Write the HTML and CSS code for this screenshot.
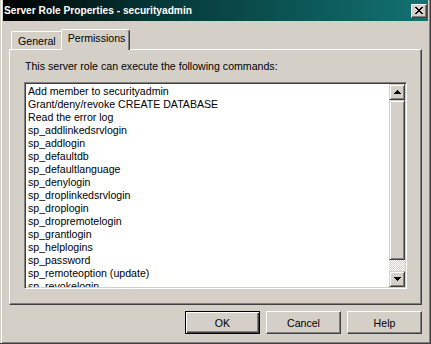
FILE: index.html
```html
<!DOCTYPE html>
<html lang="en">
<head>
    <meta charset="UTF-8">
    <meta name="viewport" content="width=device-width, initial-scale=1.0">
    <title>Server Role Properties - securityadmin</title>
    <link rel="stylesheet" href="styles.css">
</head>
<body>
    <div class="window">
        <div class="title-bar">
            <span class="title">Server Role Properties - securityadmin</span>
            <div class="close-btn">
                <svg width="8" height="7" viewBox="0 0 8 7" shape-rendering="crispEdges">
                    <path d="M0 0h2v1h-2zM6 0h2v1h-2zM1 1h2v1h-2zM5 1h2v1h-2zM2 2h4v1h-4zM3 3h2v1h-2zM2 4h4v1h-4zM1 5h2v1h-2zM5 5h2v1h-2zM0 6h2v1h-2zM6 6h2v1h-2z" fill="#000"/>
                </svg>
            </div>
        </div>

        <div class="content">
            <div class="tabs">
                <div class="tab">General</div>
                <div class="tab active">Permissions</div>
            </div>

            <div class="panel">
                <div class="caption">This server role can execute the following commands:</div>
                <div class="listbox">
                    <ul class="items">
                        <li>Add member to securityadmin</li>
                        <li>Grant/deny/revoke CREATE DATABASE</li>
                        <li>Read the error log</li>
                        <li>sp_addlinkedsrvlogin</li>
                        <li>sp_addlogin</li>
                        <li>sp_defaultdb</li>
                        <li>sp_defaultlanguage</li>
                        <li>sp_denylogin</li>
                        <li>sp_droplinkedsrvlogin</li>
                        <li>sp_droplogin</li>
                        <li>sp_dropremotelogin</li>
                        <li>sp_grantlogin</li>
                        <li>sp_helplogins</li>
                        <li>sp_password</li>
                        <li>sp_remoteoption (update)</li>
                        <li>sp_revokelogin</li>
                    </ul>
                    <div class="scrollbar">
                        <div class="sb-btn">
                            <svg width="7" height="4" viewBox="0 0 7 4" shape-rendering="crispEdges">
                                <path d="M3 0h1v1h-1zM2 1h3v1h-3zM1 2h5v1h-5zM0 3h7v1h-7z" fill="#000"/>
                            </svg>
                        </div>
                        <div class="sb-thumb"></div>
                        <div class="sb-track"></div>
                        <div class="sb-btn">
                            <svg width="7" height="4" viewBox="0 0 7 4" shape-rendering="crispEdges">
                                <path d="M0 0h7v1h-7zM1 1h5v1h-5zM2 2h3v1h-3zM3 3h1v1h-1z" fill="#000"/>
                            </svg>
                        </div>
                    </div>
                </div>
            </div>

            <div class="buttons">
                <button class="btn default">OK</button>
                <button class="btn">Cancel</button>
                <button class="btn">Help</button>
            </div>
        </div>
    </div>
</body>
</html>
```

FILE: styles.css
```css
body {
    margin: 0;
    font-family: "Liberation Sans", Arial, sans-serif;
    font-size: 10.6px;
    color: #000;
}

.window {
    width: 431px;
    height: 344px;
    box-sizing: border-box;
    background-color: #d4d0c8;
    padding: 0 2px 2px 3px;
    border-right: 1px solid #404040;
    border-bottom: 1px solid #404040;
    box-shadow: inset 1px 0 0 #d4d0c8, inset 2px 0 0 #fff, inset -1px -1px 0 #808080;
}

.title-bar {
    height: 21px;
    display: flex;
    align-items: center;
    justify-content: space-between;
    padding: 0 1px 0 1px;
    background: linear-gradient(to right, #000 0%, #063636 35%, #127272 100%);
}

.title {
    color: #fff;
    font-weight: bold;
    font-size: 10.2px;
}

.close-btn {
    width: 16px;
    height: 14px;
    box-sizing: border-box;
    display: flex;
    align-items: center;
    justify-content: center;
    background-color: #d4d0c8;
    border-top: 1px solid #fff;
    border-left: 1px solid #fff;
    border-right: 1px solid #404040;
    border-bottom: 1px solid #404040;
    box-shadow: inset -1px -1px 0 #808080;
}

.content {
    padding: 0 6px;
}

.tabs {
    margin-top: 8px;
    height: 20px;
    display: flex;
    align-items: flex-end;
    padding-left: 2px;
}

.tab {
    height: 18px;
    box-sizing: border-box;
    padding: 3px 6px 0 6px;
    line-height: 13px;
    border-top: 1px solid #fff;
    border-left: 1px solid #fff;
    border-right: 1px solid #404040;
    border-radius: 2px 3px 0 0;
    box-shadow: inset -1px 0 0 #808080;
}

.tab.active {
    position: relative;
    z-index: 1;
    height: 21px;
    margin: 0 -2px -1px -2px;
    padding: 2px 4px 0 6px;
    background-color: #d4d0c8;
}

.panel {
    height: 256px;
    box-sizing: border-box;
    padding: 10px 14px 0 14px;
    border-top: 1px solid #fff;
    border-left: 1px solid #fff;
    border-right: 1px solid #404040;
    border-bottom: 1px solid #404040;
    box-shadow: inset -1px -1px 0 #808080;
}

.caption {
    line-height: 13px;
    padding-left: 1px;
    margin-bottom: 9px;
}

.listbox {
    height: 207px;
    box-sizing: border-box;
    display: flex;
    background-color: #fff;
    border-top: 1px solid #808080;
    border-left: 1px solid #808080;
    border-right: 1px solid #fff;
    border-bottom: 1px solid #fff;
    box-shadow: inset 1px 1px 0 #404040, inset -1px -1px 0 #d4d0c8;
    padding: 1px;
}

.items {
    flex: 1;
    margin: 0;
    padding: 1px 0 0 2px;
    list-style: none;
    overflow: hidden;
    line-height: 13px;
    white-space: nowrap;
}

.scrollbar {
    width: 16px;
    display: flex;
    flex-direction: column;
}

.sb-btn,
.sb-thumb {
    box-sizing: border-box;
    background-color: #d4d0c8;
    border-top: 1px solid #d4d0c8;
    border-left: 1px solid #d4d0c8;
    border-right: 1px solid #404040;
    border-bottom: 1px solid #404040;
    box-shadow: inset 1px 1px 0 #fff, inset -1px -1px 0 #808080;
}

.sb-btn {
    height: 16px;
    display: flex;
    align-items: center;
    justify-content: center;
}

.sb-thumb {
    height: 160px;
}

.sb-track {
    flex: 1;
    background: conic-gradient(#fff 25%, #d4d0c8 0 50%, #fff 0 75%, #d4d0c8 0) 0 0 / 2px 2px;
}

.buttons {
    margin-top: 6px;
    display: flex;
    justify-content: flex-end;
    gap: 6px;
}

.btn {
    width: 75px;
    height: 23px;
    box-sizing: border-box;
    font-family: inherit;
    font-size: 10.6px;
    color: #000;
    background-color: #d4d0c8;
    border-top: 1px solid #fff;
    border-left: 1px solid #fff;
    border-right: 1px solid #404040;
    border-bottom: 1px solid #404040;
    border-radius: 0;
    box-shadow: inset -1px -1px 0 #808080;
    padding: 0;
}

.btn.default {
    border: 1px solid #000;
    box-shadow: inset 1px 1px 0 #fff, inset -1px -1px 0 #404040, inset -2px -2px 0 #808080;
}
```
